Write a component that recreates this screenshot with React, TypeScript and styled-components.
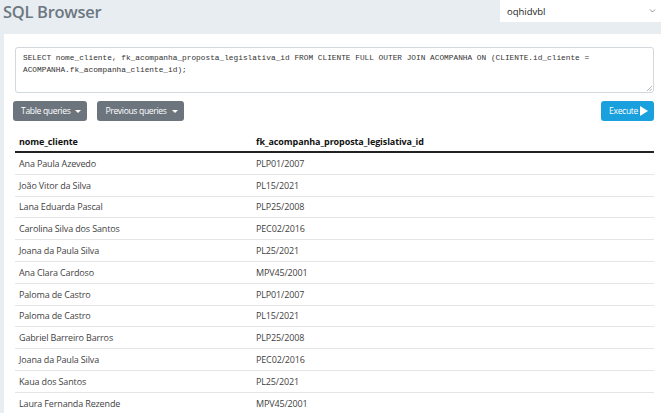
import React from "react";
import styled, { createGlobalStyle } from "styled-components";

const Global = createGlobalStyle`
  html, body { margin: 0; padding: 0; }
  body {
    background: #e8edf1;
    font-family: "Open Sans", "Noto Sans", sans-serif;
    overflow: hidden;
  }
`;

const Page = styled.div`
  width: 661px;
  height: 413px;
  display: flex;
  flex-direction: column;
  background: #e8edf1;
  overflow: hidden;
`;

const TopBar = styled.div`
  flex-shrink: 0;
  height: 34px;
  display: flex;
  align-items: flex-start;
  justify-content: space-between;
`;

const Title = styled.h1`
  margin: 0;
  padding: 0 0 0 3px;
  font-size: 16.5px;
  font-weight: 600;
  color: #6c7782;
  line-height: 24px;
  letter-spacing: -0.3px;
`;

const Select = styled.div`
  width: 161px;
  height: 22px;
  box-sizing: border-box;
  background: #fff;
  display: flex;
  align-items: center;
  justify-content: space-between;
  padding: 0 5px 0 7px;
  font-size: 9.5px;
  color: #222;
`;

const Card = styled.div`
  flex: 1;
  min-height: 0;
  margin-left: 4px;
  background: #fff;
  padding: 13px 7px 0 11px;
  display: flex;
  flex-direction: column;
`;

const Query = styled.div`
  flex-shrink: 0;
  height: 46px;
  box-sizing: border-box;
  border: 1px solid #d3d8dd;
  border-radius: 3px;
  padding: 4px 7px;
  font-family: "Liberation Mono", "DejaVu Sans Mono", monospace;
  font-size: 7.8px;
  line-height: 12px;
  color: #333;
  position: relative;
`;

const Grip = styled.svg`
  position: absolute;
  right: 1px;
  bottom: 1px;
`;

const Toolbar = styled.div`
  flex-shrink: 0;
  display: flex;
  align-items: center;
  gap: 10px;
  margin: 8px 0 0 -2px;
`;

const Btn = styled.button<{ $variant?: "info" }>`
  height: 20px;
  border: none;
  border-radius: 3px;
  padding: 0 6px 0 8px;
  font-family: "Open Sans", sans-serif;
  font-size: 8.6px;
  color: #fff;
  background: ${(p) => (p.$variant === "info" ? "#1aa0dc" : "#6c757d")};
  display: flex;
  align-items: center;
  gap: 5px;
  letter-spacing: -0.35px;
`;

const Spacer = styled.div`
  flex: 1;
`;

const Caret = styled.span`
  width: 0;
  height: 0;
  border-left: 3px solid transparent;
  border-right: 3px solid transparent;
  border-top: 3px solid #fff;
`;

const Table = styled.table`
  margin-top: 7px;
  width: 639px;
  border-collapse: collapse;
  font-size: 9px;
  color: #3f3f3f;
`;

const Th = styled.th<{ $w?: number }>`
  text-align: left;
  vertical-align: bottom;
  font-weight: 700;
  color: #111;
  padding: 0 4px 3px;
  height: 20px;
  width: ${(p) => (p.$w ? `${p.$w}px` : "auto")};
  border-bottom: 2px solid #222;
  letter-spacing: -0.1px;
`;

const Td = styled.td`
  padding: 0 4px;
  height: 20.8px;
  border-bottom: 1px solid #e3e6e9;
  letter-spacing: -0.15px;
`;

const rows: [string, string][] = [
  ["Ana Paula Azevedo", "PLP01/2007"],
  ["João Vitor da Silva", "PL15/2021"],
  ["Lana Eduarda Pascal", "PLP25/2008"],
  ["Carolina Silva dos Santos", "PEC02/2016"],
  ["Joana da Paula Silva", "PL25/2021"],
  ["Ana Clara Cardoso", "MPV45/2001"],
  ["Paloma de Castro", "PLP01/2007"],
  ["Paloma de Castro", "PL15/2021"],
  ["Gabriel Barreiro Barros", "PLP25/2008"],
  ["Joana da Paula Silva", "PEC02/2016"],
  ["Kaua dos Santos", "PL25/2021"],
  ["Laura Fernanda Rezende", "MPV45/2001"],
];

export default function App() {
  return (
    <Page>
      <Global />
      <TopBar>
        <Title>SQL Browser</Title>
        <Select>
          <span>oqhidvbl</span>
          <svg width="7" height="4" viewBox="0 0 7 4">
            <path d="M1 0.5l2.5 2.5 2.5-2.5" fill="none" stroke="#888" strokeWidth="0.9" />
          </svg>
        </Select>
      </TopBar>
      <Card>
        <Query>
          SELECT nome_cliente, fk_acompanha_proposta_legislativa_id FROM CLIENTE FULL OUTER JOIN ACOMPANHA ON (CLIENTE.id_cliente =
          ACOMPANHA.fk_acompanha_cliente_id);
          <Grip width="5" height="5" viewBox="0 0 5 5">
            <path d="M5 0L0 5M5 2.5L2.5 5" stroke="#999" strokeWidth="0.7" />
          </Grip>
        </Query>
        <Toolbar>
          <Btn>
            Table queries
            <Caret />
          </Btn>
          <Btn>
            Previous queries
            <Caret />
          </Btn>
          <Spacer />
          <Btn $variant="info">
            Execute
            <svg width="8" height="10" viewBox="0 0 8 10" style={{ marginLeft: -3 }}>
              <path d="M0 0L8 5L0 10Z" fill="#fff" />
            </svg>
          </Btn>
        </Toolbar>
        <Table>
          <thead>
            <tr>
              <Th $w={229}>nome_cliente</Th>
              <Th>fk_acompanha_proposta_legislativa_id</Th>
            </tr>
          </thead>
          <tbody>
            {rows.map(([a, b], i) => (
              <tr key={i}>
                <Td>{a}</Td>
                <Td>{b}</Td>
              </tr>
            ))}
          </tbody>
        </Table>
      </Card>
    </Page>
  );
}
